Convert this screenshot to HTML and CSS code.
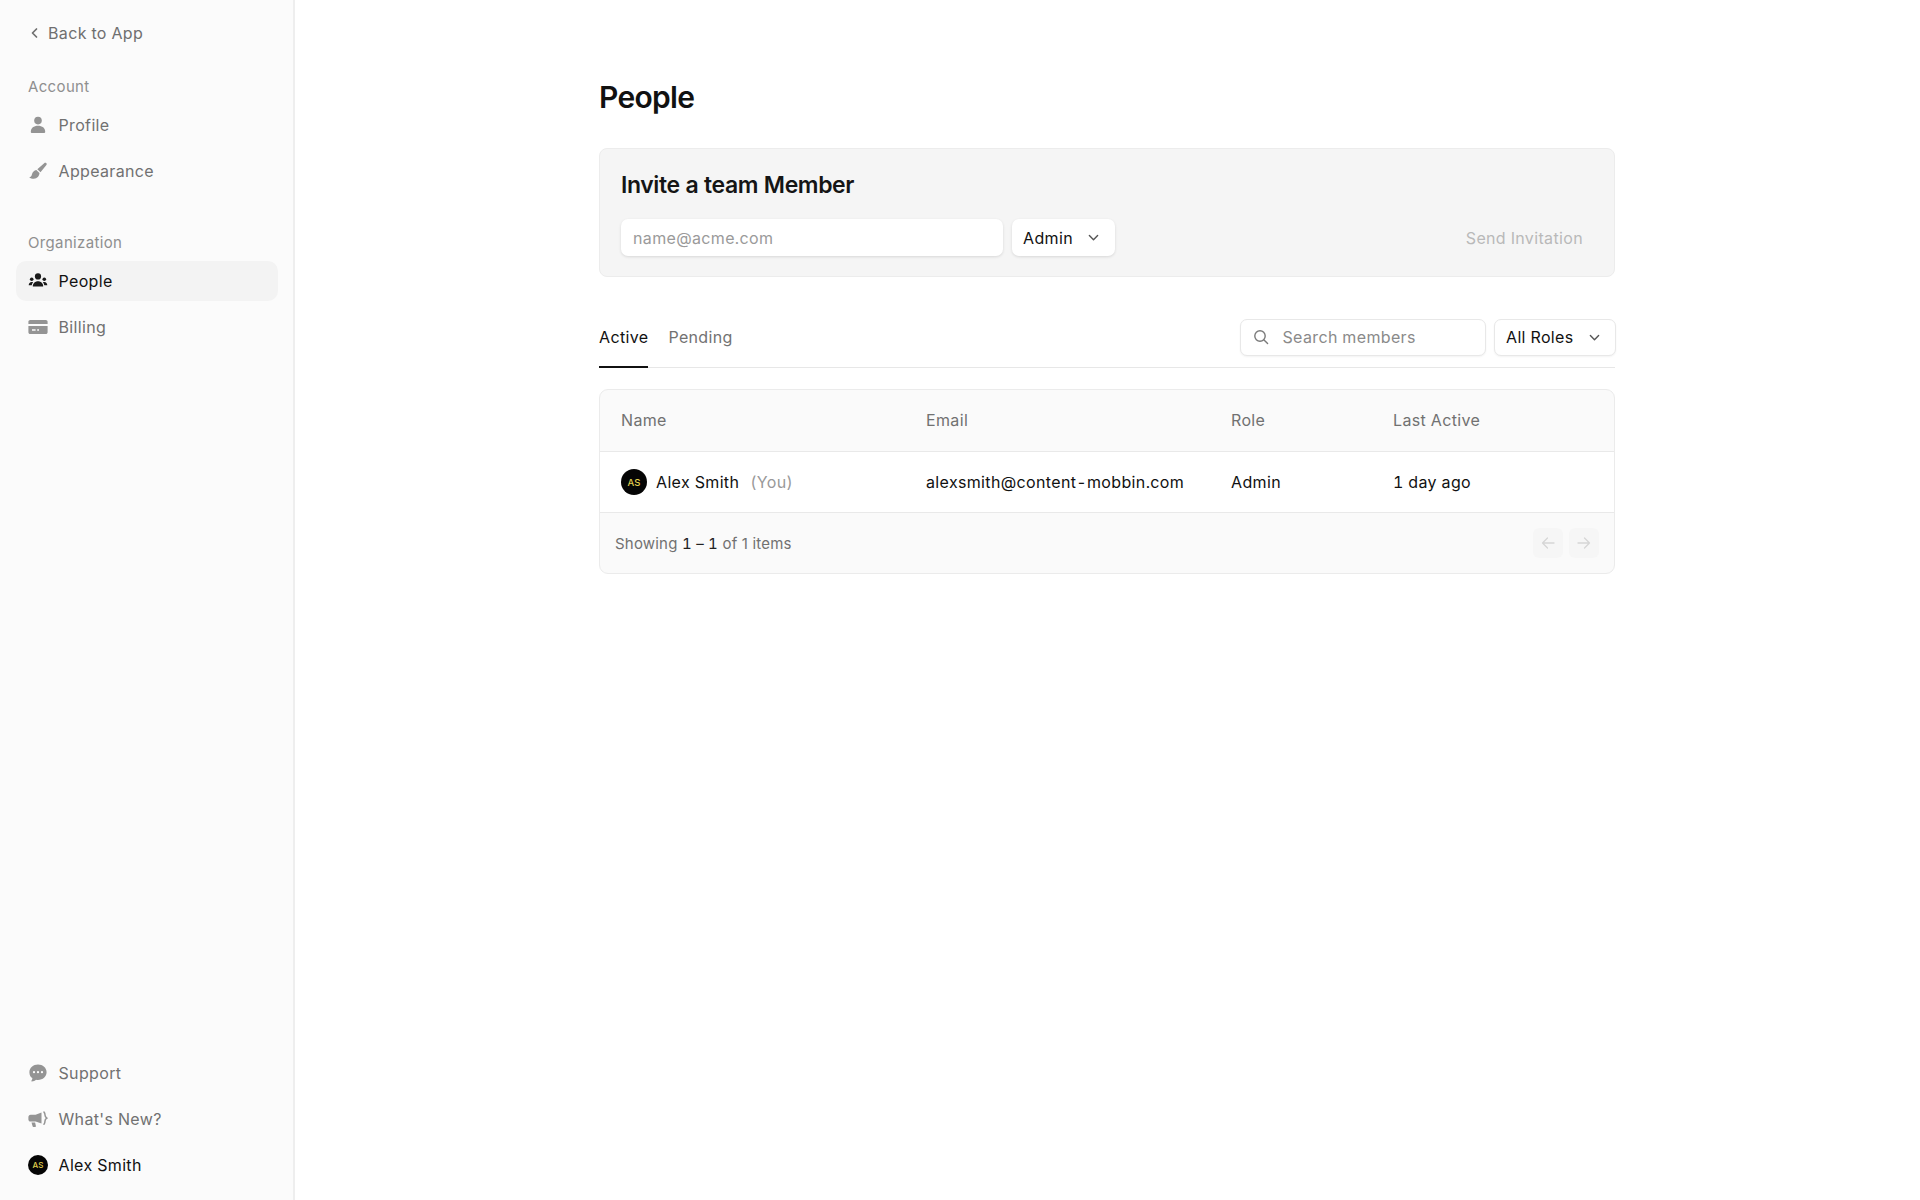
FILE: index.html
```html
<!DOCTYPE html>
<html lang="en">
<head>
<meta charset="utf-8">
<title>People</title>
<link rel="stylesheet" href="styles.css">
</head>
<body>
<div class="app">
  <aside class="sidebar">
    <div class="nav-top">
      <a class="back">
        <svg class="chev-left" viewBox="0 0 12 14"><path d="M8.500 3 4.500 7l4 4" fill="none" stroke="currentColor" stroke-width="1.700" stroke-linecap="round" stroke-linejoin="round"/></svg>
        <span>Back to App</span>
      </a>
      <div class="section account">
        <div class="section-label">Account</div>
        <a class="nav-item">
          <svg class="nav-icon" viewBox="0 0 20 20"><circle cx="10" cy="5.600" r="3.800" fill="currentColor"/><path d="M2.800 17c0-4 3-6.200 7.200-6.200s7.200 2.200 7.200 6.200c0 .5-.4.9-.9.9H3.700c-.5 0-.9-.4-.9-.9Z" fill="currentColor"/></svg>
          <span>Profile</span>
        </a>
        <a class="nav-item">
          <svg class="nav-icon" viewBox="0 0 20 20"><path d="M18.400 2.300c.5.500.4 1.200 0 1.800l-5.900 7.100-3.200-3 6.900-6c.700-.500 1.600-.500 2.200.100Z" fill="currentColor"/><path d="M8.300 9 11.500 12.100c-.100 2.900-2.200 5.600-5.700 5.600-1.700 0-3.500-.500-4.600-1.300 1.500-.400 2.200-1.300 2.700-3 .6-2.400 2.300-4.100 4.400-4.400Z" fill="currentColor"/></svg>
          <span>Appearance</span>
        </a>
      </div>
      <div class="section">
        <div class="section-label">Organization</div>
        <a class="nav-item active">
          <svg class="nav-icon" viewBox="0 0 20 20"><circle cx="10" cy="5.400" r="3.100" fill="currentColor"/><circle cx="3.700" cy="8.300" r="1.800" fill="currentColor"/><circle cx="16.300" cy="8.300" r="1.800" fill="currentColor"/><path d="M4.800 15.500c0-3 2.200-5.200 5.200-5.200s5.200 2.200 5.200 5.200H4.800Z" fill="currentColor"/><path d="M.7 14.300c0-2 1.200-3.400 3-3.400.6 0 1 .1 1.400.4-.8.900-1.300 1.900-1.400 3H.7ZM19.300 14.300c0-2-1.200-3.400-3-3.400-.6 0-1 .1-1.400.4.800.9 1.300 1.900 1.400 3h3Z" fill="currentColor"/></svg>
          <span>People</span>
        </a>
        <a class="nav-item">
          <svg class="nav-icon" viewBox="0 0 20 20"><path d="M2.200 3h15.600c1 0 1.800.8 1.800 1.800V7H.4V4.800C.4 3.800 1.200 3 2.200 3Z" fill="currentColor"/><path fill-rule="evenodd" d="M.4 9h19.200v6.200c0 1-.8 1.800-1.800 1.800H2.200c-1 0-1.800-.8-1.800-1.800V9Zm3.600 3.200v1.600h3.600v-1.600H4Zm5.200 0v1.600h1.800v-1.600H9.200Z" fill="currentColor"/></svg>
          <span>Billing</span>
        </a>
      </div>
    </div>
    <div class="nav-bottom">
      <a class="nav-item">
        <svg class="nav-icon" viewBox="0 0 20 20"><path fill-rule="evenodd" d="M10 1.500c4.800 0 8.600 3.300 8.600 7.700S14.800 16.900 10 16.900c-.7 0-1.400-.1-2-.2-1.100 1-2.500 1.700-4.200 1.800-.4 0-.6-.4-.4-.7.600-.8 1-1.800 1-2.800C2.600 14.500 1.400 12 1.400 9.200 1.400 4.800 5.200 1.500 10 1.500ZM6 8.100a1.100 1.100 0 1 0 0 2.200 1.100 1.100 0 0 0 0-2.200Zm4 0a1.100 1.100 0 1 0 0 2.200 1.100 1.100 0 0 0 0-2.200Zm4 0a1.100 1.100 0 1 0 0 2.200 1.100 1.100 0 0 0 0-2.200Z" fill="currentColor"/></svg>
        <span>Support</span>
      </a>
      <a class="nav-item">
        <svg class="nav-icon" viewBox="0 0 20 20"><path d="M13.500 3.400V14.600L7.600 12.600H2.600C1.300 12.600.4 11.600.4 10.400V8c0-1.200.9-2.300 2.200-2.300h5l5.900-2.300Z" fill="currentColor"/><path d="M3.500 13.400h3.600l.8 3.600c.1.500-.2.900-.7.900H5.400c-.4 0-.7-.2-.8-.6l-1.100-3.900Z" fill="currentColor"/><path d="M16 3.100c.9.900 1 1.900 1 3 0 1 .3 2 1.800 3-1.500 1-1.800 2-1.800 3 0 1.100-.1 2.200-1 3.100" fill="none" stroke="currentColor" stroke-width="1.500" stroke-linecap="round"/></svg>
        <span>What's New?</span>
      </a>
      <a class="nav-item user">
        <span class="avatar avatar-sm">AS</span>
        <span>Alex Smith</span>
      </a>
    </div>
  </aside>
  <main class="main">
    <div class="content">
      <h1 class="title">People</h1>
      <section class="invite">
        <h2 class="invite-title">Invite a team Member</h2>
        <div class="invite-row">
          <div class="field email-field">name@acme.com</div>
          <div class="select admin-select">
            <span>Admin</span>
            <svg class="chev" viewBox="0 0 12 12"><path d="m2.200 4.200 3.800 3.800 3.800-3.800" fill="none" stroke="currentColor" stroke-width="1.300" stroke-linecap="round" stroke-linejoin="round"/></svg>
          </div>
          <div class="send">Send Invitation</div>
        </div>
      </section>
      <div class="toolbar">
        <div class="tabs">
          <div class="tab tab-active">Active</div>
          <div class="tab">Pending</div>
        </div>
        <div class="filters">
          <div class="field search-field">
            <svg class="search-icon" viewBox="0 0 16 16"><circle cx="7" cy="7" r="5.200" fill="none" stroke="currentColor" stroke-width="1.400"/><path d="m11 11 3.600 3.600" fill="none" stroke="currentColor" stroke-width="1.400" stroke-linecap="round"/></svg>
            <span>Search members</span>
          </div>
          <div class="select roles-select">
            <span>All Roles</span>
            <svg class="chev" viewBox="0 0 12 12"><path d="m2.200 4.200 3.800 3.800 3.800-3.800" fill="none" stroke="currentColor" stroke-width="1.300" stroke-linecap="round" stroke-linejoin="round"/></svg>
          </div>
        </div>
      </div>
      <div class="table">
        <div class="row head">
          <div class="cell">Name</div>
          <div class="cell">Email</div>
          <div class="cell">Role</div>
          <div class="cell">Last Active</div>
        </div>
        <div class="row body">
          <div class="cell name-cell">
            <span class="avatar avatar-md">AS</span>
            <span>Alex Smith</span>
            <span class="you">(You)</span>
          </div>
          <div class="cell">alexsmith@content-mobbin.com</div>
          <div class="cell">Admin</div>
          <div class="cell">1 day ago</div>
        </div>
        <div class="foot">
          <div class="showing">Showing <b>1 – 1</b> of 1 items</div>
          <div class="pager">
            <div class="page-btn"><svg viewBox="0 0 16 16"><path d="M14 8H2.500M7.500 3 2.500 8l5 5" fill="none" stroke="currentColor" stroke-width="1.300" stroke-linecap="round" stroke-linejoin="round"/></svg></div>
            <div class="page-btn"><svg viewBox="0 0 16 16"><path d="M2 8h11.500M8.500 3l5 5-5 5" fill="none" stroke="currentColor" stroke-width="1.300" stroke-linecap="round" stroke-linejoin="round"/></svg></div>
          </div>
        </div>
      </div>
    </div>
  </main>
</div>
</body>
</html>
```
FILE: styles.css
```css
* { box-sizing: border-box; }
html, body { margin: 0; height: 100%; }
body {
  font-family: Inter, "Liberation Sans", sans-serif;
  font-size: 16px;
  letter-spacing: 0.35px;
  font-variant-numeric: tabular-nums;
  color: #111;
  background: #fff;
}
.app { display: flex; height: 1200px; }

.sidebar {
  width: 295px;
  flex: none;
  background: #fbfbfb;
  border-right: 2px solid #eeeeee;
  padding: 0 15px 15.500px 16px;
  display: flex;
  flex-direction: column;
  justify-content: space-between;
}
.back {
  height: 66px;
  padding-left: 12px;
  display: flex;
  align-items: center;
  gap: 8px;
  color: #6f6f6f;
}
.chev-left { width: 12px; height: 14px; flex: none; }
.section + .section { margin-top: 42px; }
.section-label {
  padding-left: 12px;
  font-size: 15px;
  line-height: 20px;
  color: #8f8f8f;
  margin-top: 11px;
  margin-bottom: 8px;
}
.nav-item {
  height: 40px;
  padding-left: 12px;
  margin-top: 6px;
  display: flex;
  align-items: center;
  gap: 10.500px;
  border-radius: 10px;
  color: #717171;
}
.section-label + .nav-item { margin-top: 0; }
.nav-item.active { background: #f3f3f3; color: #111; }
.nav-item.user { color: #111; }
.nav-icon { width: 20px; height: 20px; flex: none; color: #949494; }
.active .nav-icon { color: #1a1a1a; }
.avatar {
  display: flex;
  align-items: center;
  justify-content: center;
  border-radius: 50%;
  background: #050505;
  color: #e0d04e;
  flex: none;
  font-weight: 500;
  letter-spacing: 0;
}
.avatar-sm { width: 20px; height: 20px; font-size: 8px; }
.avatar-md { width: 26px; height: 26px; font-size: 9.500px; }

.main { flex: 1; min-width: 0; padding-left: 304px; }
.content { width: 1016px; }
.title {
  margin: 0;
  padding-top: 78px;
  font-size: 30px;
  line-height: 38px;
  font-weight: 600;
  letter-spacing: -0.7px;
  color: #111;
}
.invite {
  margin-top: 32px;
  height: 129px;
  background: #f5f5f5;
  border: 1.500px solid #ececec;
  border-radius: 8px;
  padding: 21px 21px 0;
}
.invite-title {
  margin: 0;
  font-size: 23px;
  line-height: 30px;
  font-weight: 600;
  letter-spacing: -0.4px;
  color: #151515;
}
.invite-row {
  display: flex;
  align-items: center;
  gap: 9px;
  margin-top: 19px;
}
.field {
  height: 37px;
  display: flex;
  align-items: center;
  border-radius: 7px;
  background: #fff;
  color: #9a9a9a;
}
.email-field {
  width: 382px;
  padding-left: 12px;
  box-shadow: 0 1px 3px rgba(0,0,0,.12);
}
.select {
  height: 37px;
  display: flex;
  align-items: center;
  justify-content: space-between;
  border-radius: 7px;
  background: #fff;
  color: #111;
  font-weight: 400;
  padding: 0 14px 0 11px;
}
.admin-select { width: 103px; padding-right: 15px; box-shadow: 0 1px 3px rgba(0,0,0,.12); }
.chev { width: 13px; height: 13px; color: #555; flex: none; }
.send { margin-left: auto; padding-right: 10px; color: #b9b9b9; font-weight: 400; }

.toolbar {
  margin-top: 24px;
  height: 67px;
  border-bottom: 1.500px solid #e7e7e7;
  display: flex;
  justify-content: space-between;
  align-items: flex-end;
}
.tabs { display: flex; gap: 20px; }
.tab {
  height: 66px;
  display: flex;
  align-items: center;
  padding-top: 5px;
  color: #727272;
  font-weight: 400;
  margin-bottom: -1px;
  border-bottom: 2px solid transparent;
}
.tab-active { color: #111; border-bottom-color: #111; }
.filters {
  display: flex;
  gap: 8px;
  height: 37px;
  align-self: flex-start;
  margin-top: 17.500px;
  margin-right: -1px;
}
.search-field {
  width: 246px;
  border: 1.500px solid #e8e8e8;
  padding-left: 12px;
  gap: 13.500px;
  box-shadow: 0 1px 2px rgba(0,0,0,.05);
  color: #8a8a8a;
}
.search-icon { width: 16px; height: 16px; color: #7a7a7a; flex: none; }
.roles-select { width: 122px; border: 1.500px solid #e8e8e8; box-shadow: 0 1px 2px rgba(0,0,0,.05); }

.table {
  margin-top: 21px;
  border: 1.500px solid #ebebeb;
  border-radius: 9px;
  overflow: hidden;
  background: #fafafa;
}
.row {
  display: grid;
  grid-template-columns: 305px 305px 162px 1fr;
  align-items: center;
  padding-left: 21px;
}
.head { height: 61px; padding-bottom: 2px; color: #717171; font-weight: 400; }
.body {
  height: 62px;
  background: #fff;
  color: #111;
  border-top: 1.500px solid #e9e9e9;
  border-bottom: 1.500px solid #e9e9e9;
}
.name-cell { display: flex; align-items: center; gap: 9px; }
.you { color: #999; margin-left: 2px; }
.foot {
  height: 60px;
  display: flex;
  justify-content: space-between;
  align-items: center;
  padding: 0 15px;
}
.showing { font-size: 15px; letter-spacing: 0.2px; font-variant-numeric: normal; color: #717171; }
.showing b { font-weight: 400; font-variant-numeric: tabular-nums; color: #222; }
.pager { display: flex; gap: 6px; }
.page-btn {
  width: 30px;
  height: 30px;
  border-radius: 6px;
  background: #f6f6f6;
  color: #d6d6d6;
  display: flex;
  align-items: center;
  justify-content: center;
}
.page-btn svg { width: 16px; height: 16px; }
```
